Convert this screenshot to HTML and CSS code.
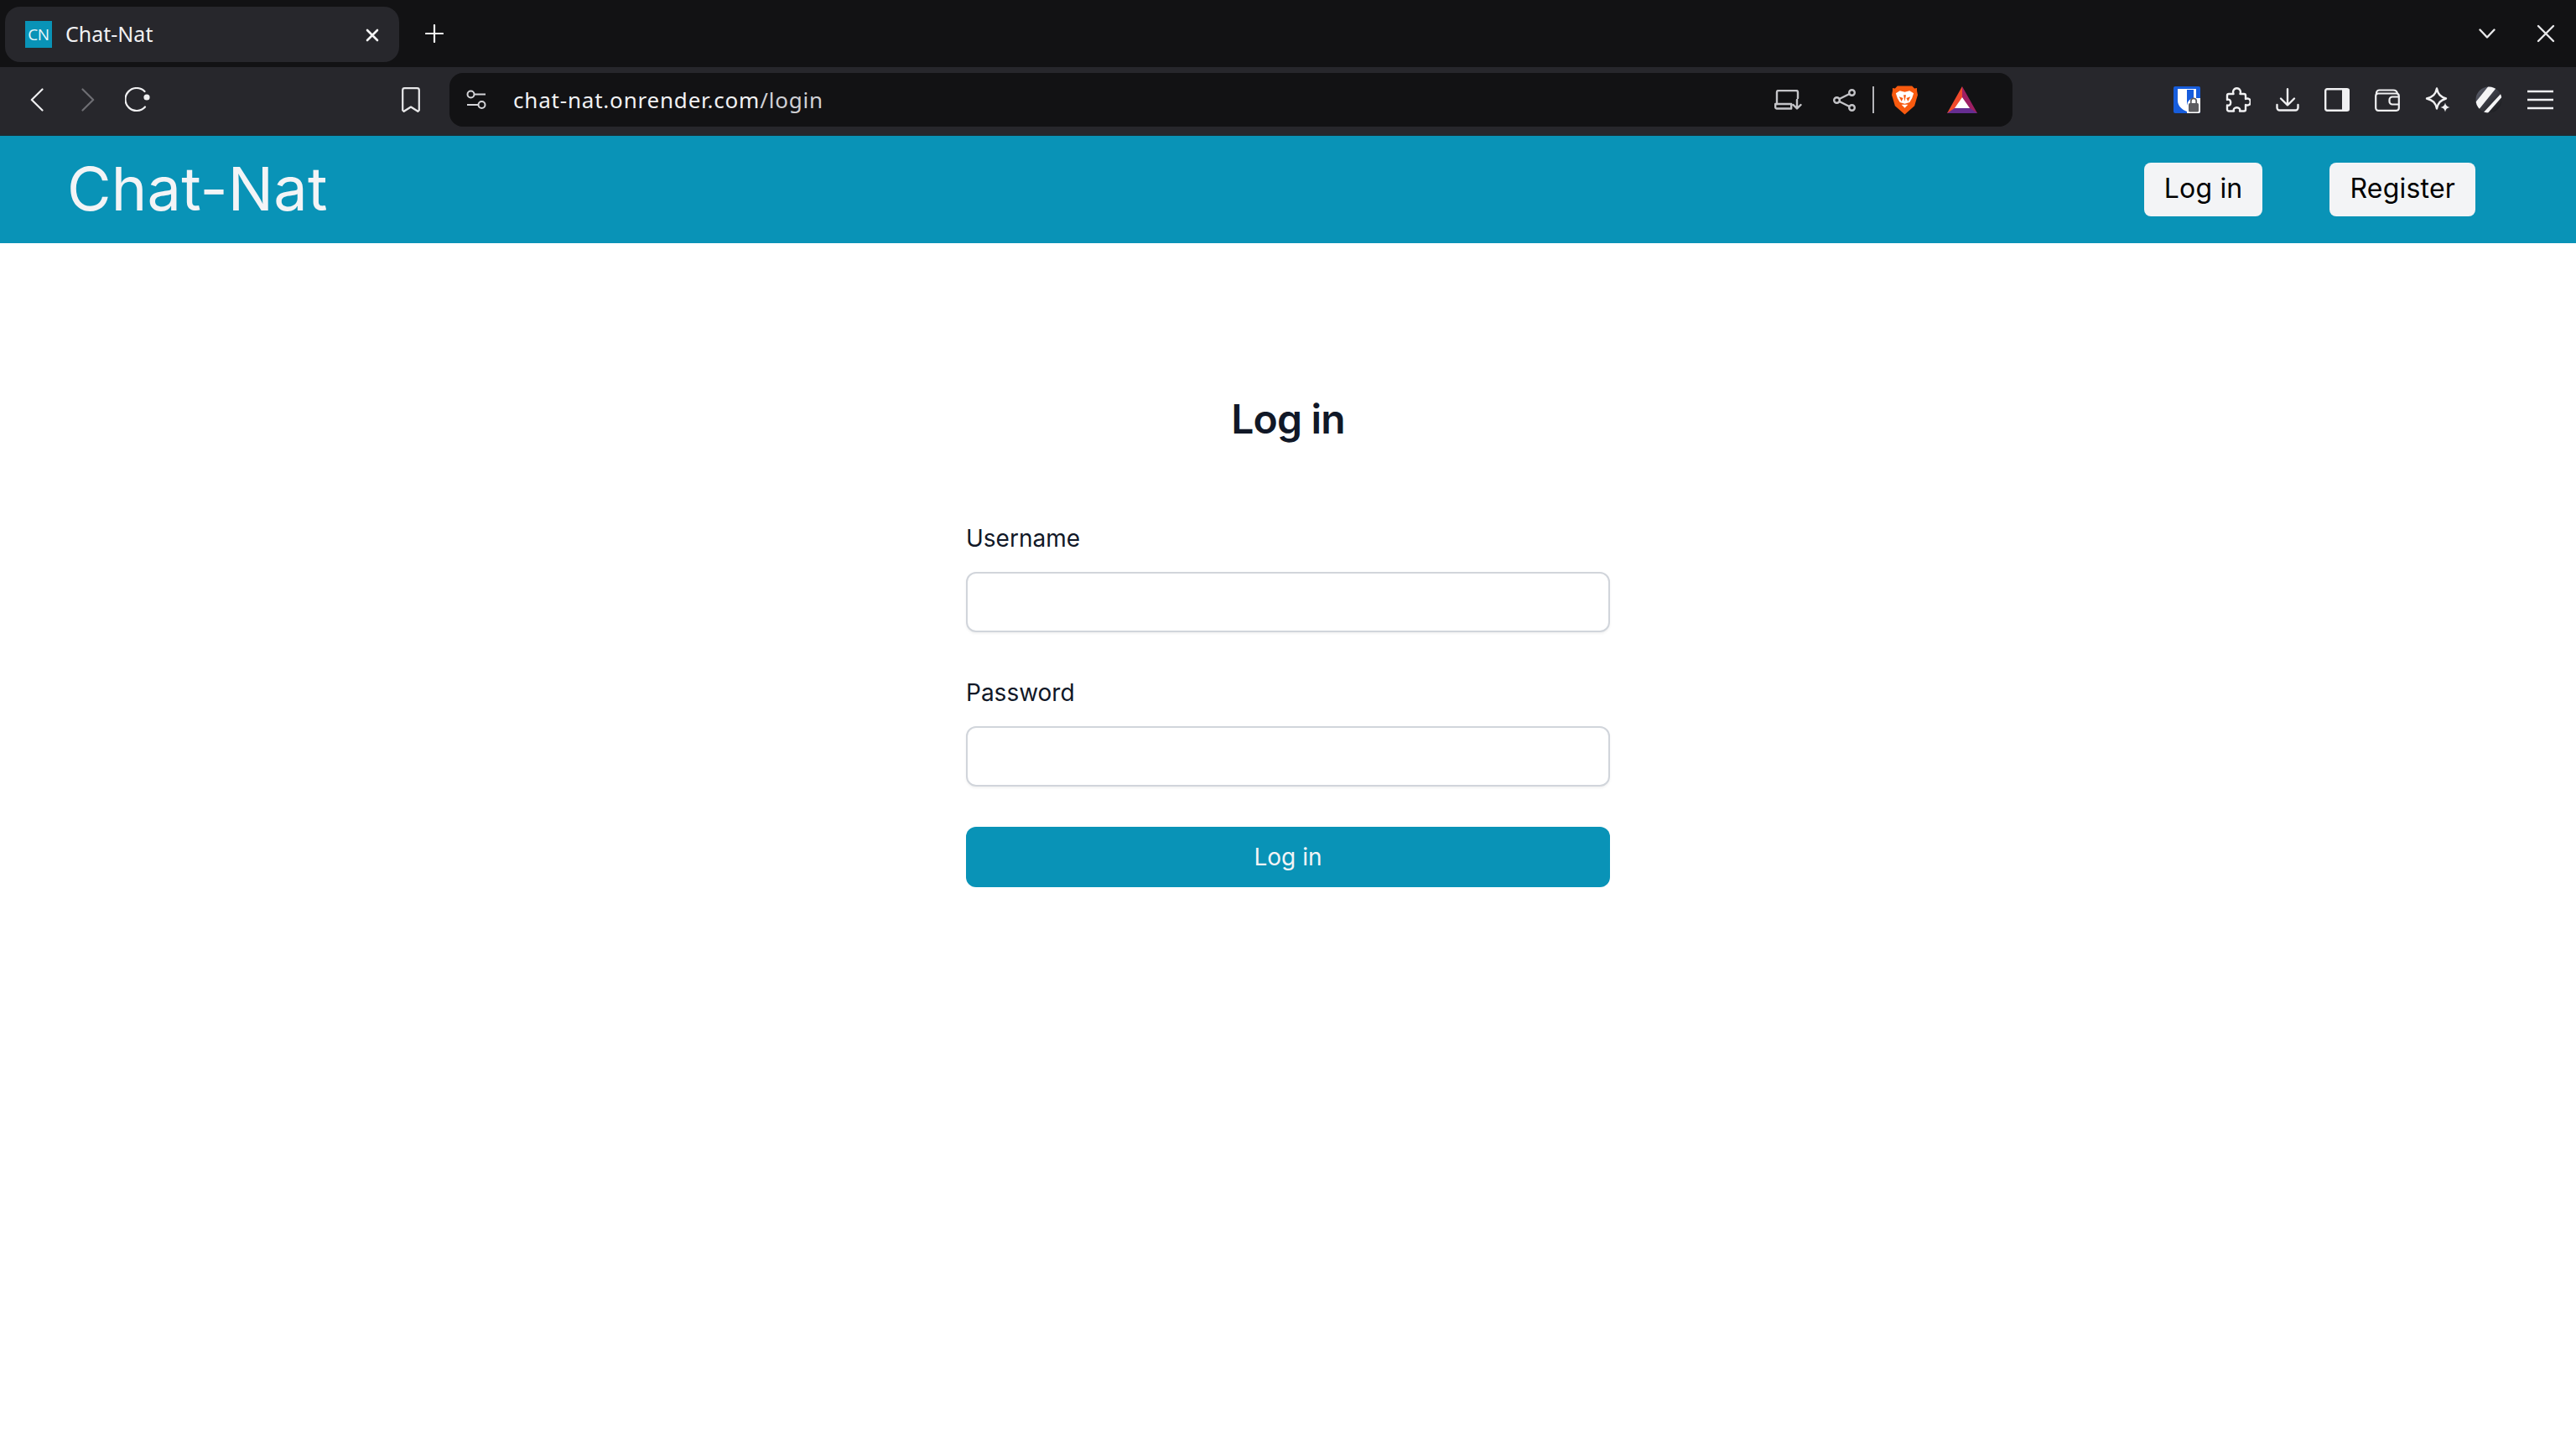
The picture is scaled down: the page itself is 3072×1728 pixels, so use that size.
FILE: index.html
```html
<!DOCTYPE html>
<html lang="en">
<head>
<meta charset="utf-8">
<title>Chat-Nat</title>
<link rel="stylesheet" href="styles.css">
</head>
<body>
<div class="tabstrip">
  <div class="tab">
    <span class="favicon">CN</span>
    <span class="tab-title">Chat-Nat</span>
    <svg class="tab-close" width="16" height="16" viewBox="0 0 16 16"><path d="M2 2l12 12M14 2L2 14" stroke="#f4f4f5" stroke-width="2.6" stroke-linecap="round"/></svg>
  </div>
  <svg class="new-tab" width="22" height="22" viewBox="0 0 22 22"><path d="M11 1v20M1 11h20" stroke="#f4f4f5" stroke-width="2.2" stroke-linecap="round"/></svg>
  <div class="strip-right">
    <svg width="20" height="14" viewBox="0 0 20 14"><path d="M1.500 2.500L10 11.500l8.500-9" fill="none" stroke="#e8e8ea" stroke-width="2.4" stroke-linecap="round" stroke-linejoin="round"/></svg>
    <svg width="22" height="22" viewBox="0 0 22 22"><path d="M2 2l18 18M20 2L2 20" stroke="#e8e8ea" stroke-width="2.4" stroke-linecap="round"/></svg>
  </div>
</div>
<div class="toolbar">
  <div class="nav">
    <svg width="16" height="28" viewBox="0 0 16 28"><path d="M14.500 1.500L1.800 14l12.700 12.500" fill="none" stroke="#f0f0f2" stroke-width="2.2" stroke-linecap="round" stroke-linejoin="round"/></svg>
    <svg class="nav-fwd" width="16" height="28" viewBox="0 0 16 28"><path d="M1.500 1.500L14.200 14 1.500 26.500" fill="none" stroke="#6e6e73" stroke-width="2.2" stroke-linecap="round" stroke-linejoin="round"/></svg>
    <svg class="nav-reload" width="32" height="30" viewBox="0 0 32 30"><path d="M24 23.500A13.500 13.500 0 1 1 23.500 5" fill="none" stroke="#f0f0f2" stroke-width="2.2" stroke-linecap="round"/><circle cx="26" cy="12" r="3.600" fill="#f0f0f2"/></svg>
  </div>
  <svg class="bookmark" width="22" height="30" viewBox="0 0 22 30"><path d="M1.200 3.500a2.300 2.300 0 0 1 2.300-2.300h15a2.300 2.300 0 0 1 2.300 2.300v24l-1.500 1.300L11 23.500l-8.300 5.300-1.500-1.300z" fill="none" stroke="#e8e8ea" stroke-width="2.200" stroke-linejoin="round"/></svg>
  <div class="urlbar">
    <svg class="site-info" width="24" height="24" viewBox="0 0 24 24"><g fill="none" stroke="#d4d4d8" stroke-width="2"><circle cx="5.500" cy="5.500" r="4"/><path d="M10 5.500h13M1 18h13"/><circle cx="18.500" cy="18" r="4"/></g></svg>
    <span class="url"><span class="url-host">chat-nat.onrender.com</span><span class="url-path">/login</span></span>
    <div class="url-actions">
      <svg width="33" height="24" viewBox="0 0 33 24"><g fill="none" stroke="#c4c4c8" stroke-width="2.400" stroke-linecap="round" stroke-linejoin="round"><path d="M3 17V3a2 2 0 0 1 2-2h21a2 2 0 0 1 2 2v7"/><path d="M1.200 17h19v5.500H3a1.800 1.800 0 0 1-1.800-1.800zM27 12v10M22.500 18l4.500 4.500 4.500-4.500"/></g></svg>
      <svg class="share" width="27" height="27" viewBox="0 0 27 27"><g fill="none" stroke="#c4c4c8" stroke-width="2.400"><circle cx="22.500" cy="4.500" r="3.300"/><circle cx="4.500" cy="13.500" r="3.300"/><circle cx="22.500" cy="22.500" r="3.300"/><path d="M7.500 12L19.500 6M7.500 15l12 6"/></g></svg>
      <span class="url-sep"></span>
      <svg class="brave" width="31" height="36" viewBox="0 0 32 36"><path d="M7 1h18l3 3 3-.500V7l1 5-1.500 5L28 25.500 16 36 4 25.500 1.500 17 0 12l1-5V3.500L4 4z" fill="#f85a0f"/><path d="M5 10l5-3 6 1.500L22 7l5 3-2 6-3 5-6 2-6-2-3-5z" fill="#fff"/><path d="M9 14l5 2-2 4zM23 14l-5 2 2 4zM14.500 12h3l-1.500 8z" fill="#f85a0f"/><path d="M12 24h8l-4 4z" fill="#fff"/></svg>
      <svg class="bat" width="36" height="32" viewBox="0 0 36 32"><path d="M18 0L0 32l18-2.500z" fill="#f04a2c"/><path d="M18 0l18 32-18-2.500z" fill="#9e1f63"/><path d="M0 32h36l-9-6H9z" fill="#662d91"/><path d="M18 13l9 13H9z" fill="#fff"/></svg>
    </div>
  </div>
  <div class="extensions">
    <svg width="32" height="32" viewBox="0 0 32 32"><rect width="32" height="32" rx="2" fill="#175ddc"/><path d="M5 3h22v14a15 15 0 0 1-11 13C10 28 5 23 5 17z" fill="#fff"/><path d="M16 4h8v13a13 13 0 0 1-4 8l-4 2z" fill="#175ddc"/><path d="M26 14a9 9 0 0 0-10 9v9h14a2 2 0 0 0 2-2V14z" fill="#fff"/><rect x="18" y="20" width="12" height="10.500" rx="1.500" fill="#5c5c60"/><path d="M20.800 20v-2.500a3.200 3.200 0 0 1 6.400 0V20" fill="none" stroke="#5c5c60" stroke-width="1.800"/></svg>
    <svg width="30" height="30" viewBox="0 0 30 30"><path d="M9.500 8c-1.200-3 .2-6.800 4-6.800S18.700 5 17.500 8H22a2 2 0 0 1 2 2v4c3-1.500 5.800.2 5.800 3.500S27 22.500 24 21v5.500a2 2 0 0 1-2 2h-5c1-2.300-.8-4.300-3.500-4.300S9 26.200 10 28.500H4a2 2 0 0 1-2-2V21.500c2.300 1 4.200-.5 4.200-3.300S4.300 14 2 15V10a2 2 0 0 1 2-2z" fill="none" stroke="#f0f0f2" stroke-width="2.400" stroke-linejoin="round"/></svg>
    <svg width="28" height="28" viewBox="0 0 28 28"><path d="M14 1.200v19M6 12.500l8 8 8-8M1.500 20v3.500a3 3 0 0 0 3 3h19a3 3 0 0 0 3-3V20" fill="none" stroke="#f0f0f2" stroke-width="2.400" stroke-linecap="round" stroke-linejoin="round"/></svg>
    <svg width="30" height="28" viewBox="0 0 30 28"><rect x="1.200" y="1.200" width="27.600" height="25.600" rx="2" fill="none" stroke="#f0f0f2" stroke-width="2.400"/><rect x="21" y="1" width="8.500" height="26" rx="1" fill="#f0f0f2"/></svg>
    <svg width="30" height="27" viewBox="0 0 30 27"><g fill="none" stroke="#f0f0f2" stroke-width="2.200" stroke-linejoin="round"><path d="M2 6V5a3.500 3.500 0 0 1 3.500-3.500H22a5 5 0 0 1 5 4"/><rect x="1.200" y="5.500" width="27.600" height="20.300" rx="3"/><path d="M29 9.500h-8a3.500 3.500 0 0 0-3.500 3.500v2a3.500 3.500 0 0 0 3.500 3.500h8"/></g></svg>
    <svg width="30" height="30" viewBox="0 0 30 30"><path d="M14 1.500c1.500 7 4.500 10 11 12-6.500 2-9.500 5-11 12-1.500-7-4.500-10-12-12 7.500-2 10.500-5 12-12z" fill="none" stroke="#f0f0f2" stroke-width="2.400" stroke-linejoin="round"/><path d="M24 18.500c.6 3 2 4.500 5.500 5.500-3.500.8-4.900 2.300-5.500 5.500-.6-3.200-2-4.700-5.500-5.500 3.500-1 4.900-2.500 5.500-5.500z" fill="#f0f0f2"/></svg>
    <svg width="32" height="32" viewBox="0 0 32 32"><defs><linearGradient id="aiGrad" x1="0" y1="0" x2="1" y2="1"><stop offset="0" stop-color="#5f6270"/><stop offset="1" stop-color="#121214"/></linearGradient><clipPath id="aiClip"><circle cx="16" cy="16" r="15.500"/></clipPath></defs><circle cx="16" cy="16" r="15.500" fill="url(#aiGrad)"/><g clip-path="url(#aiClip)"><path d="M17 -2h11L3 29l-6-6zM33 6v5L13 34H7z" fill="#f4f4f5"/></g></svg>
    <svg width="31" height="24" viewBox="0 0 31 24"><path d="M0 2h31M0 12h31M0 22h31" stroke="#f0f0f2" stroke-width="2.400"/></svg>
  </div>
</div>
<header class="site-header">
  <a class="brand">Chat-Nat</a>
  <nav class="site-nav">
    <a class="nav-btn">Log in</a>
    <a class="nav-btn">Register</a>
  </nav>
</header>
<main class="content">
  <h1 class="form-title">Log in</h1>
  <form class="form">
    <div class="field">
      <label class="field-label" for="username">Username</label>
      <input class="field-input" id="username" type="text">
    </div>
    <div class="field">
      <label class="field-label" for="password">Password</label>
      <input class="field-input" id="password" type="password">
    </div>
    <button class="submit" type="button">Log in</button>
  </form>
</main>
</body>
</html>
```
FILE: styles.css
```css
* { box-sizing: border-box; }
html, body { margin: 0; padding: 0; height: 100%; }
body { background: #fff; font-family: "Inter", "Liberation Sans", sans-serif; overflow: hidden; }
svg { display: block; flex: none; }

.tabstrip { height: 80px; background: #121214; display: flex; align-items: center; padding-left: 6px; }
.tab { width: 470px; height: 66px; margin-top: 1px; background: #27272c; border-radius: 18px; display: flex; align-items: center; padding: 0 24px; }
.favicon { width: 32px; height: 32px; background: #0993b7; color: #e8f7fb; font: 19px/33px "Open Sans", sans-serif; text-align: center; letter-spacing: -.5px; }
.tab-title { margin-left: 16px; flex: 1; color: #f1f1f3; font: 25px/32px "Noto Sans", sans-serif; margin-bottom: 2px; }
.tab-close { margin-top: 2px; }
.new-tab { margin-left: 31px; }
.strip-right { margin-left: auto; display: flex; align-items: center; gap: 49px; padding-right: 25px; }

.toolbar { height: 82px; background: #27272c; display: flex; align-items: center; padding: 0 0 2px 36px; border-bottom: 2px solid #1f2a30; }
.nav { display: flex; align-items: center; }
.nav-fwd { margin-left: 45px; }
.nav-reload { margin-left: 36px; }
.bookmark { margin-left: 298px; }
.urlbar { width: 1864px; height: 64px; margin-left: 35px; background: #121214; border-radius: 16px; display: flex; align-items: center; padding: 0 42px 0 20px; }
.url { margin-left: 32px; font: 26px "Noto Sans", sans-serif; color: #f1f1f3; letter-spacing: .8px; }
.url-path { color: #d0d0d4; }
.url-actions { margin-left: auto; display: flex; align-items: center; }
.share { margin-left: 37px; }
.url-sep { width: 2px; height: 32px; background: #b4b4b8; margin: 0 21px 0 20px; }
.bat { margin-left: 35px; }
.extensions { margin-left: 192px; display: flex; align-items: center; gap: 30px; }

.site-header { height: 128px; background: #0993b7; display: flex; align-items: center; justify-content: space-between; padding: 0 120px 0 80px; }
.brand { color: #f3f4f6; font-size: 72px; font-weight: 400; letter-spacing: .2px; margin-bottom: 4px; }
.site-nav { display: flex; gap: 80px; }
.nav-btn { height: 64px; padding: 0 24px; background: #f3f4f6; border-radius: 8px; color: #000; font: 32px/62px "Inter", sans-serif; letter-spacing: .2px; }

.content { width: 768px; margin: 0 auto; padding-top: 174px; }
.form-title { margin: 0; text-align: center; color: #111827; font-size: 48px; font-weight: 600; line-height: 72px; letter-spacing: -.8px; }
.form { margin-top: 84px; }
.field + .field { margin-top: 50px; }
.field-label { display: block; color: #111827; font-size: 28px; line-height: 40px; padding-top: 2px; }
.field-input { display: block; width: 100%; height: 72px; margin-top: 20px; border: 2px solid #d1d5db; border-radius: 12px; background: #fff; box-shadow: 0 2px 3px rgba(0,0,0,.05); }
.submit { display: block; width: 100%; height: 72px; margin-top: 48px; border: 0; border-radius: 12px; background: #0993b7; color: #f3f4f6; font: 28px "Inter", sans-serif; }
```
